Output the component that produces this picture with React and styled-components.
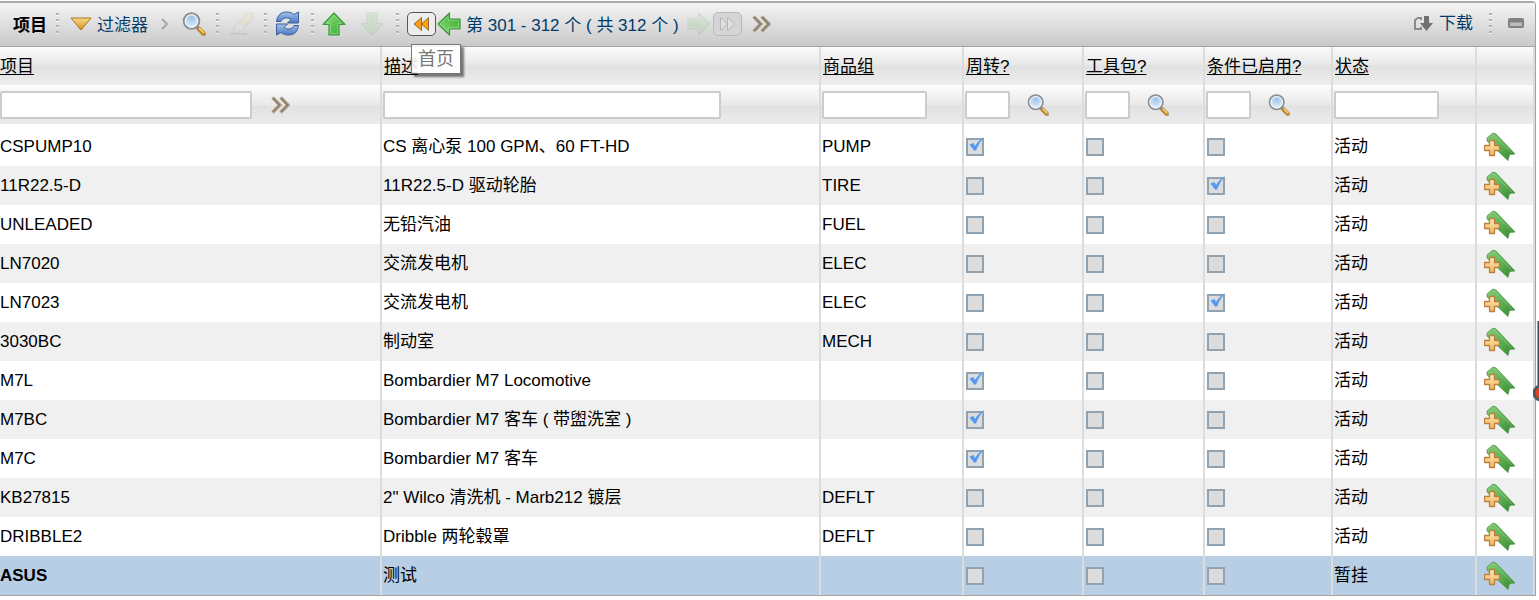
import React from "react";
import styled, { createGlobalStyle, css } from "styled-components";

const GlobalStyle = createGlobalStyle`
  * { box-sizing: border-box; }
  body {
    margin: 0;
    background: #fff;
    color: #000;
    font-family: "Liberation Sans", Arial, "Noto Sans CJK SC", sans-serif;
    font-size: 17px;
    line-height: 20px;
  }
  button, input { font: inherit; }
`;

const Page = styled.div`
  position: relative;
  overflow: hidden;
  padding: 1px 3px 4px 0;
`;

const Panel = styled.section`
  border: 1px solid #a3a3a3;
  border-left: 0;
  border-top: 2px solid #a9aba9;
  border-top-right-radius: 4px;
`;

const Toolbar = styled.header`
  display: flex;
  align-items: center;
  height: 44px;
  padding: 0 3px 2px 13px;
  background: linear-gradient(#f4f4f4, #c9c9c9);
  border-bottom: 1px solid #a2a2a2;
`;

const Title = styled.h1`
  margin: 0;
  padding: 4px 1px 0 0;
  font-size: 17px;
  line-height: 20px;
`;

const Separator = styled.span`
  width: 3px;
  height: 21px;
  margin: 0 8px;
  background: repeating-linear-gradient(#b8b5a8 0 2px, #f6f6f2 2px 3px, transparent 3px 6px);
`;

const ToolButton = styled.button`
  display: flex;
  align-items: center;
  justify-content: ${(p) => p.$align || "center"};
  flex: none;
  width: ${(p) => p.$width || 24}px;
  height: 26px;
  padding: 0;
  border: 0;
  background: none;
  &:disabled { opacity: 0.14; }
`;

const TextButton = styled.button`
  display: flex;
  align-items: center;
  gap: 5px;
  padding: 0 0 0 3px;
  border: 0;
  background: none;
  color: #003a6b;
  white-space: nowrap;
  line-height: 20px;
`;

const LowText = styled.span`
  padding-top: 4px;
  color: #003a6b;
  white-space: nowrap;
`;

const PageCount = styled(LowText)`
  margin: 0 8px 0 5px;
`;

const PageEdge = styled.span`
  position: relative;
  display: flex;
  margin-right: ${(p) => p.$gap}px;
`;

const EdgeButton = styled.button`
  display: grid;
  place-items: center;
  width: 29px;
  height: 24px;
  padding: 0;
  border: 1px solid #555;
  border-radius: 5px;
  background: #ededed;
  &:disabled {
    border-color: #bababa;
    background: #d5d5d5;
  }
`;

const Tooltip = styled.span`
  position: absolute;
  top: 32px;
  left: 4px;
  z-index: 2;
  padding: 3px 6px;
  border: 1px solid #777;
  background: rgba(255, 255, 255, 0.88);
  box-shadow: 3px 3px 2px rgba(0, 0, 0, 0.5);
  color: #777;
  font-size: 18px;
  line-height: 22px;
  white-space: nowrap;
`;

const RightTools = styled.div`
  display: flex;
  align-items: center;
  gap: 8px;
  margin-left: auto;
`;

const Table = styled.table`
  width: 100%;
  table-layout: fixed;
  border-collapse: separate;
  border-spacing: 0;
`;

const Col = styled.col`
  width: ${(p) => (p.$width ? p.$width + "px" : "auto")};
`;

const cell = css`
  border-right: 2px solid #dcdcdc;
  text-align: left;
  vertical-align: middle;
  white-space: nowrap;
`;

const HeadCell = styled.th`
  ${cell}
  height: 38px;
  padding: 2px 0 0 2px;
  font-weight: 400;
  background: linear-gradient(#fbfbfb, #e9e9e9 45%, #e1e1e1 50%, #ededed);
  &:first-child { padding-left: 0; }
`;

const SortLink = styled.a`
  color: #000;
  text-decoration: underline;
  text-underline-offset: 2px;
`;

const FilterCell = styled.td`
  ${cell}
  height: 39px;
  padding: 1px 0 0 1px;
  background: linear-gradient(#fdfdfd, #e9e9e9 50%, #e1e1e1 55%, #ececec);
  &:first-child { padding-left: 0; }
`;

const FilterBox = styled.div`
  display: flex;
  align-items: center;
  gap: 16px;
`;

const FilterInput = styled.input`
  width: ${(p) => p.$width}px;
  height: 28px;
  padding: 0 4px;
  border: 2px solid #ccc;
  border-radius: 2px;
  background: #fff;
`;

const Row = styled.tr`
  height: 39px;
  background: ${(p) => (p.$selected ? "#b8cee5" : "#fff")};
  &:nth-child(even) { background: ${(p) => (p.$selected ? "#b8cee5" : "#f0f0f0")}; }
  &:first-child td { padding-top: 3px; height: 42px; }
`;

const Cell = styled.td`
  ${cell}
  padding: 0 0 0 1px;
  font-weight: ${(p) => (p.$bold ? 700 : 400)};
  &:first-child { padding-left: 0; }
`;

const CheckWrap = styled.label`
  position: relative;
  display: block;
  width: 18px;
  height: 18px;
  margin-left: 1px;
  svg { position: absolute; left: 2px; top: -1px; pointer-events: none; }
`;

const CheckBox = styled.input`
  appearance: none;
  display: block;
  width: 18px;
  height: 18px;
  margin: 0;
  border: 2px solid #91a3b0;
  background: #dcdcdc;
`;

const ActionButton = styled.button`
  display: block;
  height: 30px;
  margin-left: 6px;
  padding: 0;
  border: 0;
  background: none;
`;

const EdgeHandle = styled.div`
  position: absolute;
  top: 320px;
  right: 0;
  display: flex;
`;

const Magnifier = ({ size = 24 }) => (
  <svg width={size} height={size} viewBox="0 0 24 24">
    <defs>
      <radialGradient id="lens" cx=".5" cy=".3" r=".7">
        <stop offset="0" stopColor="#9cc3ea" />
        <stop offset="1" stopColor="#edf5fd" />
      </radialGradient>
    </defs>
    <path d="M16 16l6 6" stroke="#8f8d86" strokeWidth="5" strokeLinecap="round" opacity=".5" />
    <path d="M15 15l2 2" stroke="#777" strokeWidth="3" />
    <path d="M17 17l4.500 4.500" stroke="#b98224" strokeWidth="4" strokeLinecap="round" />
    <path d="M17.500 16.500l4 4" stroke="#f7c763" strokeWidth="2" strokeLinecap="round" />
    <circle cx="9.500" cy="9" r="7.800" fill="url(#lens)" stroke="#8c9092" strokeWidth="2" />
    <circle cx="9.500" cy="9" r="6.300" fill="none" stroke="#f5f9fc" />
  </svg>
);

const Triangle = () => (
  <svg width="22" height="14" viewBox="0 0 22 14">
    <defs>
      <linearGradient id="gold" x2="0" y2="1">
        <stop offset="0" stopColor="#f8dc8c" />
        <stop offset="1" stopColor="#d88a18" />
      </linearGradient>
    </defs>
    <path d="M1 1h20L11 13z" fill="url(#gold)" stroke="#aa701b" strokeLinejoin="round" />
  </svg>
);

const Chevron = () => (
  <svg width="8" height="12" viewBox="0 0 8 12">
    <path d="M1 1l5 5-5 5" fill="none" stroke="#aaa79e" strokeWidth="2" />
  </svg>
);

const Chevrons = () => (
  <svg width="19" height="18" viewBox="0 0 19 18">
    <g fill="none" strokeLinejoin="miter">
      <path d="M1.500 1.500L9 9l-7.500 7.500M9.500 1.500L17 9l-7.500 7.500" stroke="#b3a793" strokeWidth="3.400" />
      <path d="M2 2l6.500 7L2 16M10 2l6.500 7-6.500 7" stroke="#8f7d66" strokeWidth="1.800" />
    </g>
  </svg>
);

const Eraser = () => (
  <svg width="25" height="24" viewBox="0 0 25 24">
    <path d="M1 22h17" stroke="#777" strokeWidth="2" />
    <path d="M5 16L18 1h6v5L12 19l-6 2z" fill="#f5d37b" stroke="#927b50" />
    <path d="M5 16l5-6 6 5-4 4-6 2z" fill="#f2f2f2" stroke="#999" />
  </svg>
);

const Refresh = () => (
  <svg width="25" height="25" viewBox="0 0 25 25">
    <defs>
      <linearGradient id="blue" x2="0" y2="1">
        <stop offset="0" stopColor="#a3c3ee" />
        <stop offset="1" stopColor="#4a78bf" />
      </linearGradient>
    </defs>
    <g fill="url(#blue)" stroke="#3a5f9c" strokeLinejoin="round">
      <path d="M1.500 10.500C2.500 4 6 1 11.500 1c3 0 5.500.700 7.500 2.500L23.500 1v11H12.500l3.500-3.500C12 5.500 7.500 7 6 10.500z" />
      <path d="M23.500 14.500c-1 6.500-4.500 9.500-10 9.500-3 0-5.500-.700-7.500-2.500L1.500 24V13H12.500L9 16.500c4 3 8.500 1.500 10-2z" />
    </g>
  </svg>
);

const turns = { up: 0, right: 90, down: 180, left: 270 };
const Arrow = ({ to }) => (
  <svg width="24" height="24" viewBox="0 0 24 24">
    <defs>
      <linearGradient id="leaf" x2="1" y2="1">
        <stop offset="0" stopColor="#8ee07d" />
        <stop offset="1" stopColor="#37a42d" />
      </linearGradient>
    </defs>
    <g transform={`rotate(${turns[to]} 12 12)`}>
      <path d="M12 1l11 11.500h-6V23H7V12.500H1z" fill="url(#leaf)" stroke="#3a9a3c" strokeWidth="1.200" strokeLinejoin="round" />
      <path d="M12 3l7.500 8.200H15.700V21.500H8.300V11.200H4.300z" fill="none" stroke="#a5e99a" opacity=".55" />
    </g>
  </svg>
);

const Rewind = () => (
  <svg width="17" height="16" viewBox="0 0 17 16">
    <path d="M8.500 1.500v13L1 8zM15.500 1.500v13L8.500 8z" fill="#ff9d0c" stroke="#8a6a3c" strokeLinejoin="round" />
  </svg>
);

const Forward = () => (
  <svg width="17" height="16" viewBox="0 0 17 16">
    <path d="M1.500 1.500v13L8.500 8zM8.500 1.500v13L16 8z" fill="#dfdfdf" stroke="#b7b7b7" strokeLinejoin="round" />
  </svg>
);

const Download = () => (
  <svg width="21" height="17" viewBox="0 0 21 17">
    <path d="M8 5V3H5L2 5v9h6v-2" fill="none" stroke="#8b8b8b" strokeWidth="2" />
    <path d="M11 1h5v7h4l-6.500 8L7 8h4z" fill="#707070" />
  </svg>
);

const Minimize = () => (
  <svg width="16" height="11" viewBox="0 0 16 11">
    <rect x="1" y="1" width="14" height="8" rx="1" fill="#bdbdbd" stroke="#808080" strokeWidth="2" />
    <path d="M1 3h14" stroke="#808080" strokeWidth="3" />
  </svg>
);

const Tick = () => (
  <svg width="17" height="15" viewBox="0 0 17 15">
    <path d="M1.500 7.500l4-1.500 1.500 3c2.500-4 5.500-7 9.500-9-4 4-6.500 8-8.500 13.500H6z" fill="#5299f0" />
  </svg>
);

const BookmarkAdd = () => (
  <svg width="32" height="30" viewBox="0 0 32 30">
    <defs>
      <linearGradient id="ribbon" x2="1" y2="1">
        <stop offset="0" stopColor="#86d078" />
        <stop offset=".6" stopColor="#56a84e" />
        <stop offset="1" stopColor="#2f802c" />
      </linearGradient>
      <linearGradient id="plus" x2="0" y2="1">
        <stop offset="0" stopColor="#ffe9b4" />
        <stop offset="1" stopColor="#f0b45c" />
      </linearGradient>
    </defs>
    <path d="M3 6l6-5 3 1 19 20-5.500.5-1.500 6L3 9z" fill="url(#ribbon)" stroke="#4c9c48" strokeWidth=".8" />
    <path d="M10 3l18 18.500" stroke="#a0dc92" opacity=".5" />
    <path d="M5.500 8.500h5v5h5v5h-5v5h-5v-5h-5v-5h5z" fill="url(#plus)" stroke="#bb7f42" strokeWidth="1.300" strokeLinejoin="round" />
  </svg>
);

const Handle = () => (
  <svg width="6" height="84" viewBox="0 0 6 84">
    <path d="M5.500 1v66" stroke="#384651" strokeWidth="2" />
    <circle cx="8" cy="73" r="7" fill="#e8401c" stroke="#4b5964" strokeWidth="3" />
  </svg>
);

const columns = [
  { label: "项目", width: 382, input: 252, more: true },
  { label: "描述", input: 338 },
  { label: "商品组", width: 143, input: 105 },
  { label: "周转?", width: 120, input: 45, search: true },
  { label: "工具包?", width: 121, input: 45, search: true },
  { label: "条件已启用?", width: 128, input: 45, search: true },
  { label: "状态", width: 144, input: 105 },
];

const rows = [
  ["CSPUMP10", "CS 离心泵 100 GPM、60 FT-HD", "PUMP", [1, 0, 0], "活动"],
  ["11R22.5-D", "11R22.5-D 驱动轮胎", "TIRE", [0, 0, 1], "活动"],
  ["UNLEADED", "无铅汽油", "FUEL", [0, 0, 0], "活动"],
  ["LN7020", "交流发电机", "ELEC", [0, 0, 0], "活动"],
  ["LN7023", "交流发电机", "ELEC", [0, 0, 1], "活动"],
  ["3030BC", "制动室", "MECH", [0, 0, 0], "活动"],
  ["M7L", "Bombardier M7 Locomotive", "", [1, 0, 0], "活动"],
  ["M7BC", "Bombardier M7 客车 ( 带盥洗室 )", "", [1, 0, 0], "活动"],
  ["M7C", "Bombardier M7 客车", "", [1, 0, 0], "活动"],
  ["KB27815", '2" Wilco 清洗机 - Marb212 镀层', "DEFLT", [0, 0, 0], "活动"],
  ["DRIBBLE2", "Dribble 两轮毂罩", "DEFLT", [0, 0, 0], "活动"],
  ["ASUS", "测试", "", [0, 0, 0], "暂挂"],
];

const flags = ["周转", "工具包", "条件已启用"];

export default function App() {
  return (
    <Page>
      <GlobalStyle />
      <Panel>
        <Toolbar>
          <Title>项目</Title>
          <Separator />
          <TextButton><Triangle /><LowText>过滤器</LowText></TextButton>
          <ToolButton $width={34} aria-label="展开过滤器"><Chevron /></ToolButton>
          <ToolButton $width={26} $align="flex-start" aria-label="搜索"><Magnifier /></ToolButton>
          <Separator />
          <ToolButton $width={29} disabled aria-label="清除"><Eraser /></ToolButton>
          <Separator />
          <ToolButton $width={28} $align="flex-start" aria-label="刷新"><Refresh /></ToolButton>
          <Separator />
          <ToolButton $width={38} $align="flex-start" aria-label="上一行"><Arrow to="up" /></ToolButton>
          <ToolButton $width={28} $align="flex-start" disabled aria-label="下一行"><Arrow to="down" /></ToolButton>
          <Separator />
          <PageEdge $gap={1}>
            <EdgeButton aria-label="首页" aria-describedby="first-tip"><Rewind /></EdgeButton>
            <Tooltip role="tooltip" id="first-tip">首页</Tooltip>
          </PageEdge>
          <ToolButton aria-label="上一页"><Arrow to="left" /></ToolButton>
          <PageCount>第 301 - 312 个 ( 共 312 个 )</PageCount>
          <ToolButton $width={26} $align="flex-start" disabled aria-label="下一页"><Arrow to="right" /></ToolButton>
          <PageEdge $gap={8}>
            <EdgeButton disabled aria-label="末页"><Forward /></EdgeButton>
          </PageEdge>
          <ToolButton aria-label="更多"><Chevrons /></ToolButton>
          <RightTools>
            <TextButton><Download />下载</TextButton>
            <Separator />
            <ToolButton $align="flex-start" aria-label="最小化"><Minimize /></ToolButton>
          </RightTools>
        </Toolbar>
        <Table>
          <colgroup>
            {columns.map((c) => <Col key={c.label} $width={c.width} />)}
            <Col $width={58} />
          </colgroup>
          <thead>
            <tr>
              {columns.map((c) => (
                <HeadCell key={c.label} scope="col"><SortLink href="#">{c.label}</SortLink></HeadCell>
              ))}
              <HeadCell />
            </tr>
            <tr>
              {columns.map((c) => (
                <FilterCell key={c.label}>
                  <FilterBox>
                    <FilterInput $width={c.input} aria-label={c.label} />
                    {c.search && <ToolButton aria-label="查找"><Magnifier size={22} /></ToolButton>}
                    {c.more && <ToolButton aria-label="更多"><Chevrons /></ToolButton>}
                  </FilterBox>
                </FilterCell>
              ))}
              <FilterCell />
            </tr>
          </thead>
          <tbody>
            {rows.map(([id, description, group, checks, status]) => (
              <Row key={id} $selected={id === "ASUS"}>
                <Cell $bold={id === "ASUS"}>{id}</Cell>
                <Cell>{description}</Cell>
                <Cell>{group}</Cell>
                {checks.map((on, i) => (
                  <Cell key={flags[i]}>
                    <CheckWrap>
                      <CheckBox type="checkbox" checked={!!on} readOnly aria-label={flags[i]} />
                      {!!on && <Tick />}
                    </CheckWrap>
                  </Cell>
                ))}
                <Cell>{status}</Cell>
                <Cell><ActionButton aria-label="添加书签"><BookmarkAdd /></ActionButton></Cell>
              </Row>
            ))}
          </tbody>
        </Table>
      </Panel>
      <EdgeHandle><Handle /></EdgeHandle>
    </Page>
  );
}
